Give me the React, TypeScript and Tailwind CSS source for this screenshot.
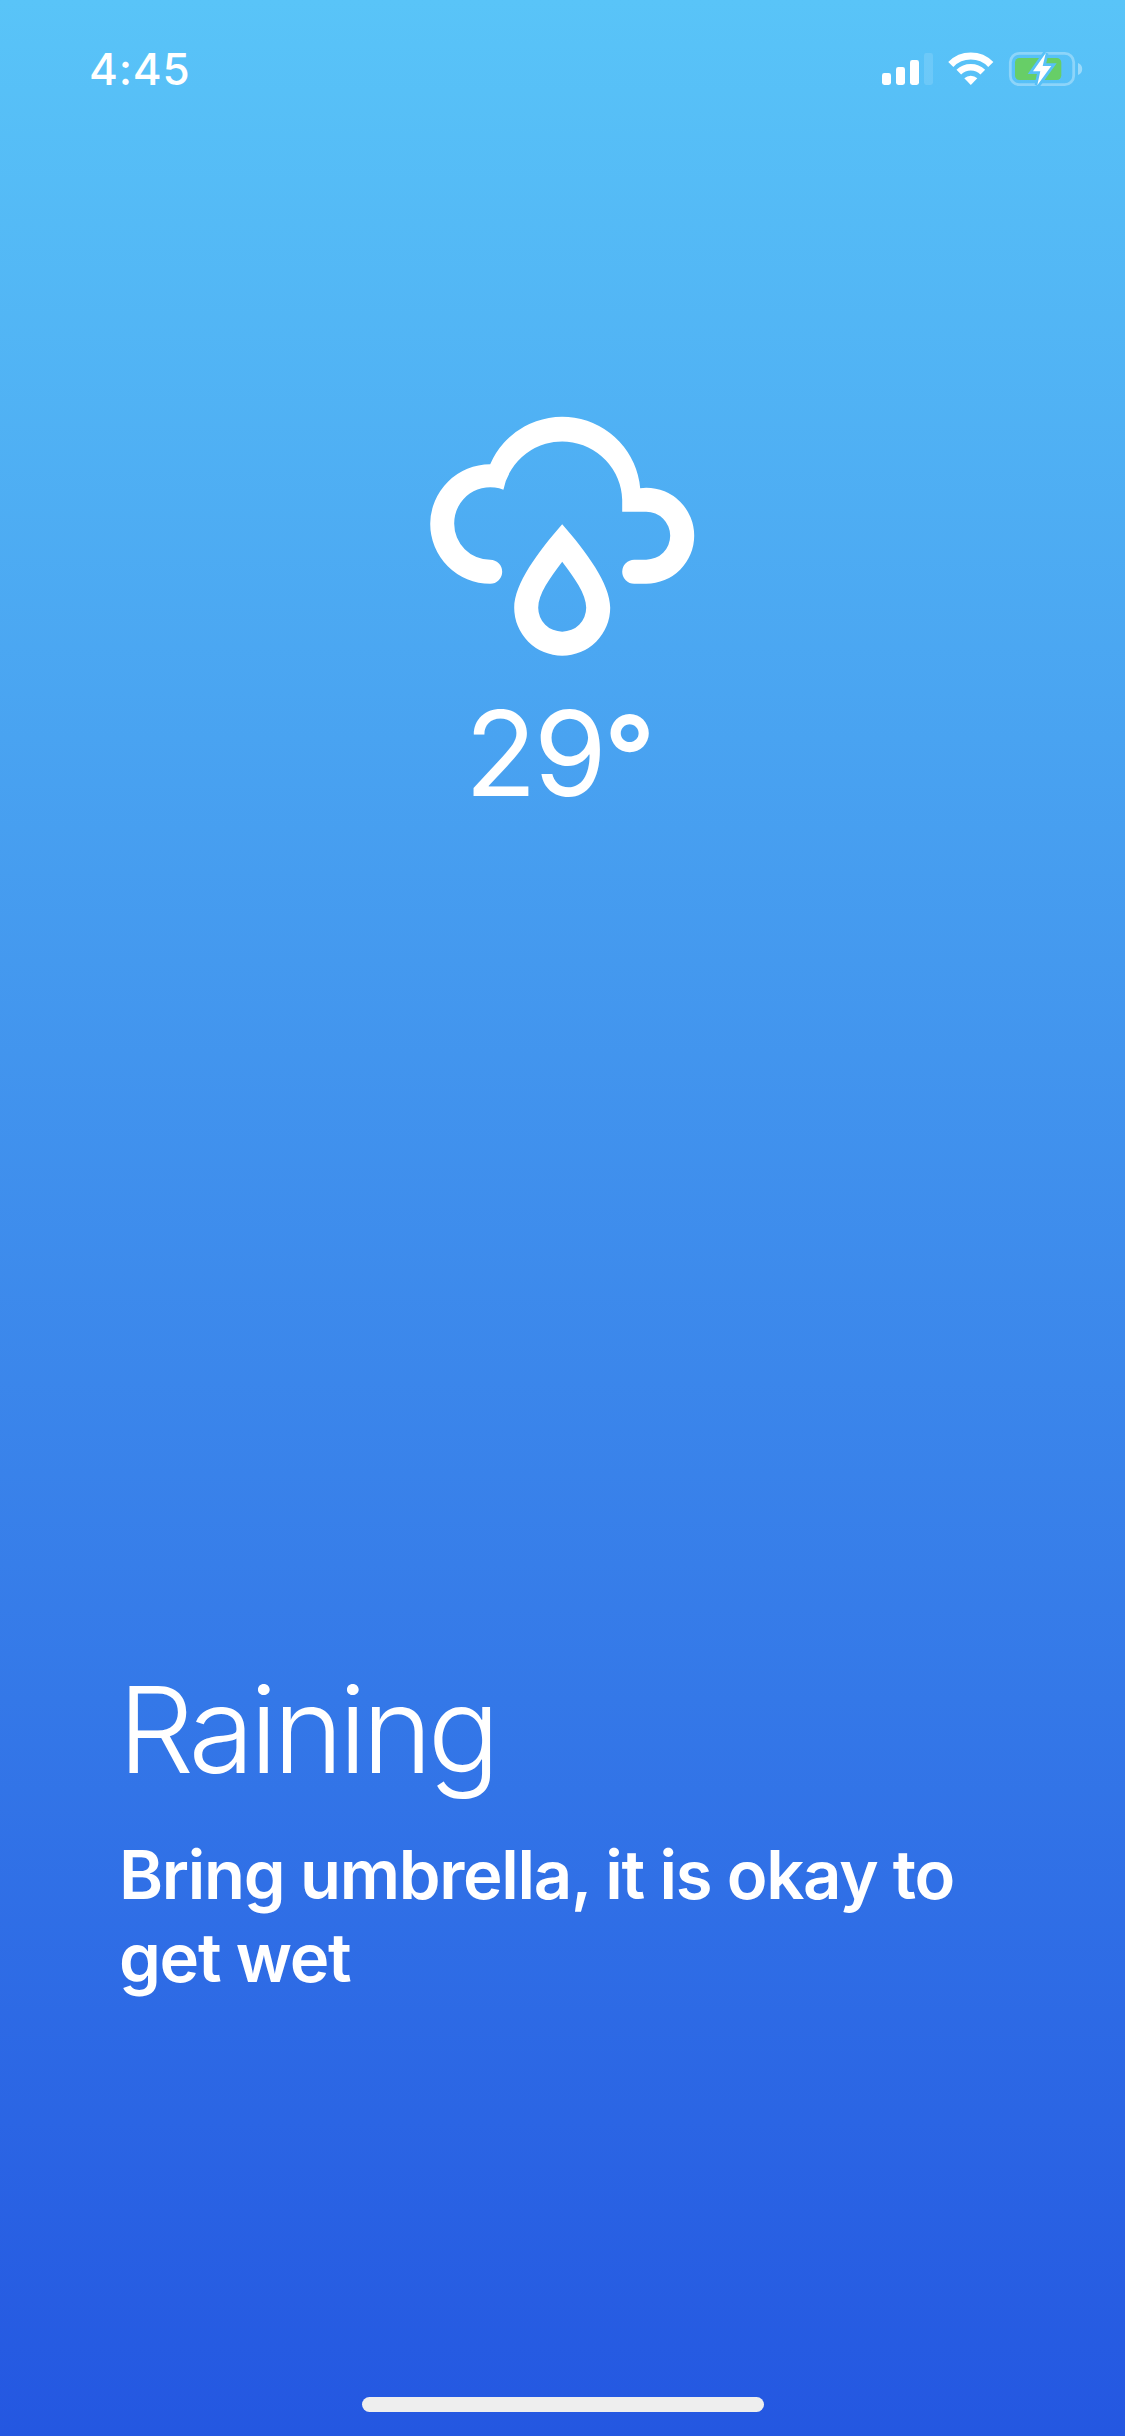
function StatusIcons() {
  return (
    <svg className="h-20 w-60" viewBox="0 0 240 80" fill="none" aria-hidden="true">
      <g fill="#fff">
        <rect x="22" y="43" width="9" height="12" rx="2.4" />
        <rect x="36" y="37" width="9" height="18" rx="2.4" />
        <rect x="50" y="30" width="9" height="25" rx="2.4" />
        <rect x="64" y="23" width="9" height="32" rx="2.4" opacity="0.13" />
      </g>
      <g stroke="#fff">
        <path d="M90.8 34.4A28 28 0 0 1 130.8 34.4" strokeWidth="7.2" />
        <path d="M98.8 42.2A17 17 0 0 1 122.8 42.2" strokeWidth="6.6" />
      </g>
      <path d="M104.3 48.3A9.5 9.5 0 0 1 117.3 48.3L110.8 55Z" fill="#fff" />
      <mask id="bolt-gap" maskUnits="userSpaceOnUse" x="140" y="10" width="90" height="60">
        <rect x="140" y="10" width="90" height="60" fill="#fff" />
        <path d="M185.8 23L173 41.3H180.3L177.3 55.3L191.3 36H182.7Z" fill="#000" stroke="#000" strokeWidth="5.5" />
      </mask>
      <g mask="url(#bolt-gap)">
        <rect x="150.3" y="23.3" width="63.4" height="31.4" rx="9" stroke="#fff" strokeOpacity="0.32" strokeWidth="2.8" />
        <rect x="155" y="28" width="46.3" height="22" rx="4.5" fill="#67CE67" />
      </g>
      <path d="M218 33A6.4 6.4 0 0 1 218 45Z" fill="#fff" fillOpacity="0.4" />
      <path d="M185.8 23L173 41.3H180.3L177.3 55.3L191.3 36H182.7Z" fill="#fff" />
    </svg>
  );
}

function RainCloud() {
  return (
    <svg className="h-[270px] w-[300px]" viewBox="2.8 0.3 300 270" fill="#fff" aria-hidden="true">
      <path d="M80 64.6A78.3 78.3 0 0 1 230 88.6L236 88A48 48 0 0 1 284 136A48 48 0 0 1 236 184H224A12 12 0 0 1 224 160H236A24 24 0 0 0 236 112H212V100A60 60 0 0 0 93.2 90A36 36 0 0 0 44 124A36 36 0 0 0 80 160A12 12 0 0 1 80 184A60 60 0 0 1 20 124A60 60 0 0 1 80 64.6Z" />
      <path
        fillRule="evenodd"
        d="M152 124.5C128 152 104 184 104 208A48 48 0 0 0 200 208C200 184 176 152 152 124.5ZM152 162C140 178 128 194 128 208A24 24 0 0 0 176 208C176 194 164 178 152 162Z"
      />
    </svg>
  );
}

export default function App() {
  return (
    <div className="flex h-[2436px] w-[1125px] flex-col bg-linear-to-b/srgb from-[#59c4f8] to-[#2457e1] font-['Inter',sans-serif] text-white">
      <header className="flex h-[110px] items-start justify-between pt-[30px] pr-[25px] pl-[89px]">
        <time className="mt-[15px] text-[44px] leading-[48px] font-medium tracking-[0.8px]">4:45</time>
        <StatusIcons />
      </header>

      <section className="mt-[290px] flex flex-col items-center">
        <RainCloud />
        <p className="mt-[13px] h-[140px] pr-[8px] text-[118px] leading-[140px] font-normal tracking-[-3px]">
          29<span className="text-[112px] font-semibold">°</span>
        </p>
      </section>

      <section className="mt-[837px] pl-[119px]">
        <h1 className="-ml-[1px] h-[140px] text-[120px] leading-[140px] font-[330] tracking-[-4.8px]">Raining</h1>
        <p className="mt-[33px] w-[900px] text-[67px] leading-[83px] font-semibold tracking-[-1.3px]">
          Bring umbrella, it is okay to
          <br />
          get wet
        </p>
      </section>

      <div className="mx-auto mt-auto mb-6 h-[15px] w-[402px] rounded-full bg-[#eee]" />
    </div>
  );
}
